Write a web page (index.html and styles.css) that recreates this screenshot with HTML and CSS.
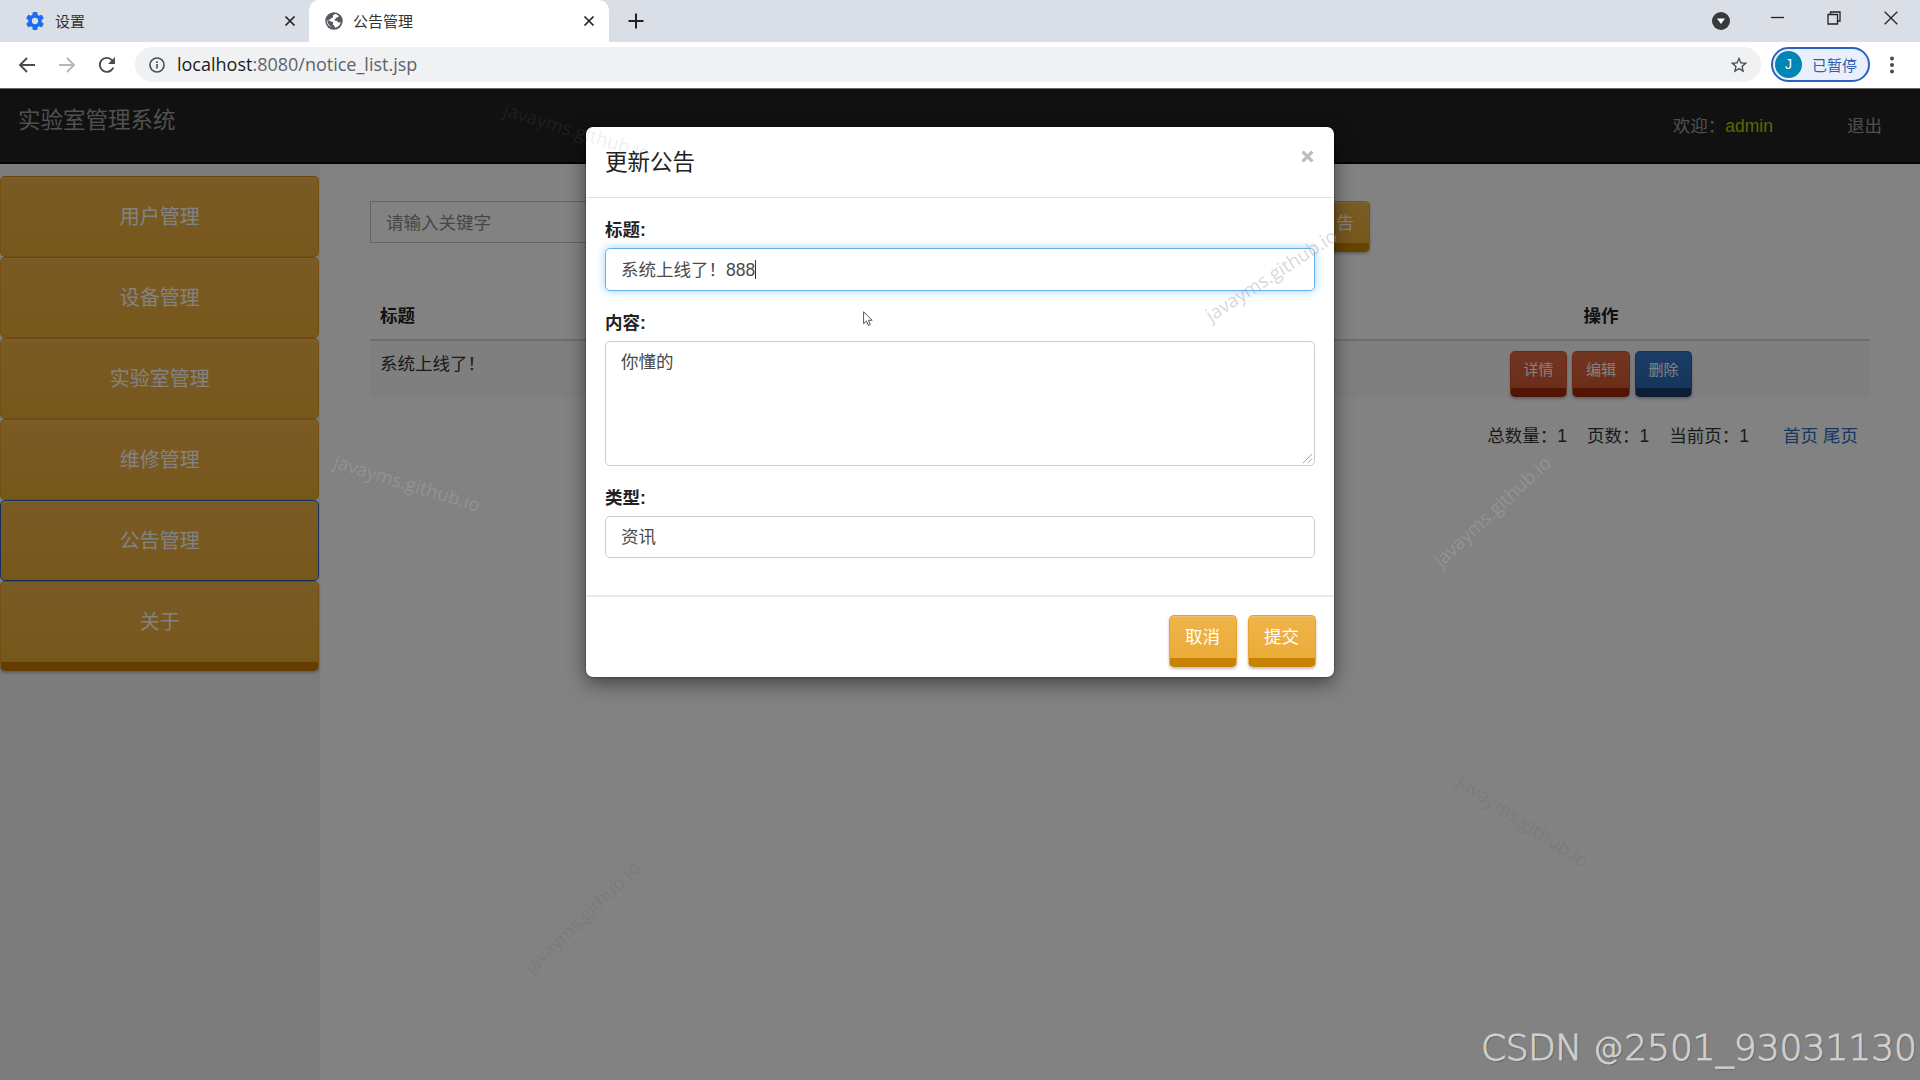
FILE: index.html
```html
<!DOCTYPE html>
<html lang="zh-CN">
<head>
<meta charset="utf-8">
<title>公告管理</title>
<link rel="stylesheet" href="styles.css">
</head>
<body>
<div class="window">
  <div class="tabstrip">
    <div class="tab">
      <svg class="fav" viewBox="2 2 20 20"><path fill="#1a6cf0" d="M19.4 13c.04-.32.07-.66.07-1s-.03-.68-.07-1l2.1-1.65c.2-.15.25-.42.13-.64l-2-3.46c-.12-.22-.39-.3-.61-.22l-2.49 1a7.300 7.300 0 0 0-1.690-.98l-.38-2.650A.49.49 0 0 0 14 2h-4a.49.49 0 0 0-.49.42l-.38 2.650c-.61.25-1.170.59-1.690.98l-2.490-1a.49.49 0 0 0-.61.22l-2 3.460c-.13.22-.07.49.12.64L4.570 11c-.04.32-.07.65-.07 1s.03.68.07 1l-2.110 1.650c-.19.15-.24.42-.12.64l2 3.460c.12.22.39.3.61.22l2.490-1c.52.4 1.080.73 1.690.98l.38 2.650c.03.24.24.4.49.4h4c.25 0 .46-.16.49-.4l.38-2.650c.61-.25 1.170-.59 1.690-.98l2.490 1c.22.08.49 0 .61-.22l2-3.460a.5.5 0 0 0-.12-.64zM12 15.500a3.500 3.500 0 1 1 0-7 3.500 3.500 0 0 1 0 7z"/></svg>
      <span class="tab-title">设置</span>
      <svg class="tab-x" viewBox="0 0 12 12"><path d="M1.500 1.500l9 9m0-9l-9 9"/></svg>
    </div>
    <div class="tab active">
      <svg class="fav" viewBox="0 0 20 20"><circle cx="10" cy="10" r="9.700" fill="#55595e"/><path fill="#fff" d="M11.800 2.300c1.500.5 2.800 1.300 3.600 2.300-.3 1-1.300 1-2.200 1.400-1 .4-.9 1.500-1.900 1.700-.8.300-1 .9-.6 1.600.6.700 1.900.2 2.700.8.700.6.900 1.400 1.900 1.500.9.100 1.700-.4 2.300-.3-.8 3-3 5.500-6.300 6.200-.9-.4-.3-1.500-.9-2.300-.5-.6-1.600-.8-1.700-1.700 0-.7.600-1.300.200-2-.6-.8-1.900-.6-2.900-1.100-1-.6-1.700-1.600-3.600-1.400.300 3.600 2.200 6.500 5.600 7.800-3.600-.4-6.200-3.700-6.100-7.300.500-1 2-.6 3.200-.9 1-.3 1-1.300 1.900-1.700.8-.4 1.700-.2 1.900-1 .1-.9-.4-1.600.1-2.400.6-.8 1.900-.7 2.800-1.200z"/></svg>
      <span class="tab-title">公告管理</span>
      <svg class="tab-x" viewBox="0 0 12 12"><path d="M1.500 1.500l9 9m0-9l-9 9"/></svg>
    </div>
    <svg class="newtab" viewBox="0 0 16 16"><path d="M8 .5v15M.5 8h15"/></svg>
    <div class="controls">
      <svg width="18" height="18" viewBox="0 0 18 18"><circle cx="9" cy="9" r="9" fill="#37393d"/><path d="M5 6.500h8l-4 5.500z" fill="#fff"/></svg>
      <svg width="13" height="14" viewBox="0 0 13 14"><path d="M0 6.500h13" stroke="#222" stroke-width="1.300"/></svg>
      <svg width="14" height="14" viewBox="0 0 14 14"><path d="M1 3.500h9.500V13H1zM3.500 3V1H13v9h-2" fill="none" stroke="#222" stroke-width="1.300"/></svg>
      <svg width="14" height="14" viewBox="0 0 14 14"><path d="M.7.7l12.600 12.600m0-12.600L.7 13.300" stroke="#222" stroke-width="1.300"/></svg>
    </div>
  </div>
  <div class="toolbar">
    <svg class="nav" viewBox="0 0 18 18"><path d="M17 9H2.500M9 2L2 9l7 7"/></svg>
    <svg class="nav off" viewBox="0 0 18 18"><path d="M1 9h14.500M9 2l7 7-7 7"/></svg>
    <svg class="nav" viewBox="0 0 18 18"><path d="M15.300 11.500A7 7 0 1 1 14 4.200l2 2"/><path class="solid" d="M17 1v7h-7z"/></svg>
    <div class="address">
      <svg class="info" viewBox="0 0 18 18"><circle cx="9" cy="9" r="7.900"/><path d="M9 8v5M9 4.800v1.900"/></svg>
      <span class="url"><b>localhost</b>:8080/notice_list.jsp</span>
      <svg class="star" viewBox="0 0 24 24"><path d="M22 9.240l-7.190-.62L12 2 9.190 8.630 2 9.240l5.460 4.730L5.820 21 12 17.270 18.180 21l-1.630-7.030zM12 15.400l-3.760 2.270 1-4.280-3.320-2.880 4.380-.38L12 6.100l1.710 4.040 4.380.38-3.320 2.880 1 4.280z"/></svg>
    </div>
    <div class="profile"><span class="avatar">J</span><span>已暂停</span></div>
    <svg class="more" viewBox="0 0 6 18"><circle cx="3" cy="2.500" r="2"/><circle cx="3" cy="9" r="2"/><circle cx="3" cy="15.500" r="2"/></svg>
  </div>

  <div class="page">
    <header class="topbar">
      <span class="brand">实验室管理系统</span>
      <span class="hello">欢迎：<em>admin</em></span>
      <span class="logout">退出</span>
    </header>
    <div class="content">
      <nav class="sidebar">
        <a class="item">用户管理</a>
        <a class="item">设备管理</a>
        <a class="item">实验室管理</a>
        <a class="item">维修管理</a>
        <a class="item focus">公告管理</a>
        <a class="item last">关于</a>
      </nav>
      <main class="main">
        <div class="filters">
          <div class="search">请输入关键字</div>
          <div class="btn add">告</div>
        </div>
        <div class="thead"><span>标题</span><span class="ops">操作</span></div>
        <div class="trow">
          <span>系统上线了！</span>
          <div class="ops">
            <div class="btn small red">详情</div>
            <div class="btn small red">编辑</div>
            <div class="btn small blue">删除</div>
          </div>
        </div>
        <div class="pager">
          <span>总数量：1</span><span>页数：1</span><span>当前页：1</span>
          <span class="links"><a>首页</a><a>尾页</a></span>
        </div>
      </main>
    </div>

    <div class="backdrop">
      <section class="modal">
        <div class="modal-head">
          <h4>更新公告</h4>
          <svg class="close" viewBox="0 0 12 12"><path d="M1.500 1.500l9 9m0-9l-9 9"/></svg>
        </div>
        <div class="modal-body">
          <div class="label">标题:</div>
          <div class="field focused">系统上线了！888<i class="caret"></i></div>
          <div class="label">内容:</div>
          <div class="field area">你懂的
            <svg class="grip" viewBox="0 0 12 12"><path d="M1 11L11 1M6 11l5-5"/></svg>
          </div>
          <div class="label">类型:</div>
          <div class="field">资讯</div>
        </div>
        <div class="modal-foot">
          <div class="btn">取消</div>
          <div class="btn">提交</div>
        </div>
      </section>
    </div>
  </div>

  <span class="wm w1">javayms.github.io</span>
  <span class="wm w2">javayms.github.io</span>
  <span class="wm w3">javayms.github.io</span>
  <span class="wm w4">javayms.github.io</span>
  <span class="wm w5">javayms.github.io</span>
  <span class="wm w6">javayms.github.io</span>
  <span class="csdn"><span class="name">CSDN</span> <span class="at">@</span>2501_93031130</span>
  <svg class="cursor" viewBox="0 0 10 16"><path d="M.6.8v11.800l2.800-2.600 1.900 4.400 2-.9-1.900-4.200h3.800z"/></svg>
</div>
</body>
</html>
```
FILE: styles.css
```css
* { box-sizing: border-box; }
body {
  margin: 0;
  font-family: "Liberation Sans", "Noto Sans CJK SC", sans-serif;
  font-size: 17.5px;
  line-height: 25px;
  color: #333;
}
.window {
  position: relative;
  width: 1920px;
  height: 1080px;
  overflow: hidden;
  display: flex;
  flex-direction: column;
}

/* browser chrome */
.tabstrip {
  height: 42px;
  flex: none;
  display: flex;
  background: #dadee6;
}
.tab {
  width: 309px;
  height: 42px;
  padding: 0 13px 0 26px;
  display: flex;
  align-items: center;
  font-size: 15px;
  color: #333;
}
.tab.active {
  width: 300px;
  padding: 0 15px 0 16px;
  background: #fff;
  border-radius: 10px 10px 0 0;
}
.fav { width: 18px; height: 18px; flex: none; }
.tab-title { margin-left: 11px; flex: 1; line-height: 24px; padding-top: 1px; }
.tab.active .tab-title { margin-left: 10px; }
.tab-x { width: 12px; height: 12px; stroke: #222; stroke-width: 1.7; }
.tab.active .tab-x { margin-right: -1px; }
.newtab {
  width: 16px;
  height: 16px;
  margin: 13px 0 0 19px;
  stroke: #222;
  stroke-width: 2;
}
.controls {
  margin-left: auto;
  padding: 11px 22px 0 0;
  display: grid;
  grid-template-columns: 18px 13px 14px 14px;
  column-gap: 42px;
}
.controls svg:nth-child(1) { margin: 1px 0 0 -1px; }
.controls svg:nth-child(2) { margin-left: -2px; }
.controls svg:nth-child(3) { margin-left: -1px; }
.toolbar {
  height: 47px;
  flex: none;
  display: flex;
  align-items: center;
  background: #fff;
  padding: 0 20px 1px 18px;
  border-bottom: 1px solid #666;
}
.nav {
  width: 18px;
  height: 18px;
  margin-right: 22px;
  fill: none;
  stroke: #494c50;
  stroke-width: 1.900;
}
.nav.off { stroke: #b4b6b9; }
.nav .solid { fill: #494c50; stroke: none; }
.address {
  width: 1626px;
  height: 35px;
  margin-left: -3px;
  padding: 0 12px 0 14px;
  border-radius: 18px;
  background: #f0f1f3;
  display: flex;
  align-items: center;
}
.info { width: 16px; height: 16px; fill: none; stroke: #494c50; stroke-width: 1.800; }
.url {
  flex: 1;
  margin: -1px 0 0 12px;
  font: 18px/24px "Open Sans", "Noto Sans", sans-serif;
  color: #5f6368;
}
.url b { font-weight: 400; color: #1b1b1b; }
.star { width: 20px; height: 20px; fill: #494c50; }
.profile {
  width: 99px;
  height: 35px;
  margin-left: 10px;
  padding-left: 2px;
  border: 2px solid #2b62c0;
  border-radius: 18px;
  background: #eaf0fb;
  display: flex;
  align-items: center;
  gap: 10px;
  font-size: 15px;
  color: #2f5fae;
}
.profile span:last-child { padding-top: 2px; }
.avatar {
  width: 27px;
  height: 27px;
  border-radius: 50%;
  background: #0086b5;
  color: #fff;
  font: 14px/27px "Liberation Sans", sans-serif;
  text-align: center;
}
.more { width: 6px; height: 18px; margin-left: 19px; fill: #494c50; }

/* application */
.page { position: relative; flex: 1; display: flex; flex-direction: column; }
.topbar {
  height: 75px;
  flex: none;
  display: flex;
  background: #222;
  border-bottom: 2px solid #080808;
  color: #9d9d9d;
  padding: 0 38px 0 18px;
}
.brand { flex: 1; font-size: 22.500px; line-height: 64px; }
.hello, .logout { line-height: 75px; }
.hello em { font-style: normal; color: #bac800; }
.logout { width: 35px; margin-left: 74px; }
.content { flex: 1; display: flex; background: #fff; }
.sidebar {
  width: 320px;
  padding-top: 12px;
  background: #f4f4f4;
  border-right: 1px solid #f0f0f0;
}
.item {
  display: block;
  height: 81px;
  width: 318.5px;
  padding-left: 1px;
  border: 1px solid #e39c20;
  border-top-color: #d2881a;
  border-radius: 5px;
  background: linear-gradient(#f1b24a, #e8ab36);
  box-shadow: inset 0 1px 0 #f6be63;
  color: #fff;
  font-size: 20px;
  line-height: 81px;
  text-align: center;
}
.item.focus { border: 1px solid #2a64b0; }
.item.last {
  height: 90px;
  border-bottom: 9px solid #c27a00;
  box-shadow: inset 0 1px 0 #f6be63, 0 2px 3px rgba(0, 0, 0, .25);
}
.main { width: 1550px; padding: 37px 0 0 50px; }
.filters { display: flex; height: 92px; align-items: flex-start; }
.search {
  width: 500px;
  height: 42px;
  border: 1px solid #c4c4c4;
  padding: 0 15px;
  line-height: 42px;
  color: #8a8a8a;
}
.btn {
  height: 52px;
  min-width: 68px;
  border: 1px solid #e5a52f;
  border-bottom: 9px solid #c78300;
  border-radius: 5px;
  background: linear-gradient(#f0b44a, #eaab37);
  box-shadow: 0 2px 3px rgba(0, 0, 0, .25), inset 0 1px 0 #f6c267;
  color: #fff;
  line-height: 42px;
  text-align: center;
}
.add { height: 51px; width: 120px; margin-left: 380px; padding-right: 15px; text-align: right; }
.thead {
  height: 48px;
  padding: 0 10px;
  border-bottom: 2px solid #d8d8d8;
  display: flex;
  justify-content: space-between;
  font-weight: 700;
  line-height: 46px;
  color: #222;
}
.ops { width: 518px; display: flex; justify-content: center; gap: 5px; }
.trow {
  height: 57px;
  padding: 10px;
  display: flex;
  justify-content: space-between;
  background: #f9f9f9;
  line-height: 27px;
}
.btn.small { height: 46px; min-width: 57px; width: 57.5px; font-size: 15px; line-height: 36px; }
.red { background: linear-gradient(#dd6a43, #d45a32); border-color: #cf532d; border-bottom-color: #a02a0c; box-shadow: 0 2px 3px rgba(0, 0, 0, .25); }
.blue { background: linear-gradient(#3478c8, #2b6ab4); border-color: #2462ad; border-bottom-color: #163b6b; box-shadow: 0 2px 3px rgba(0, 0, 0, .25); }
.pager {
  padding: 26px 12px 0 0;
  display: flex;
  justify-content: flex-end;
  gap: 20px;
}
.links { display: flex; gap: 5px; margin-left: 14px; color: #2f6db8; }

/* dialog */
.backdrop {
  position: absolute;
  inset: 0;
  padding-top: 38px;
  background: rgba(0, 0, 0, .49);
}
.modal {
  width: 748px;
  height: 550px;
  margin-left: 586px;
  border-radius: 7px;
  background: #fff;
  box-shadow: 0 6px 19px rgba(0, 0, 0, .5), 0 0 2px rgba(0, 0, 0, .6);
}
.modal-head {
  height: 71px;
  padding: 0 20px 0 19px;
  border-bottom: 1px solid #e2e2e2;
  display: flex;
  justify-content: space-between;
}
.modal-head h4 { margin: 0; font-size: 22.500px; font-weight: 400; line-height: 71px; color: #222; }
.close { width: 13px; height: 13px; margin-top: 23px; stroke: #bdbdbd; stroke-width: 3; }
.modal-body { height: 399px; padding: 20px 19px 0; border-bottom: 2px solid #e9e9e9; }
.label { height: 30px; font-weight: 700; line-height: 25px; color: #222; }
.field {
  height: 42.5px;
  margin-bottom: 20px;
  padding: 1px 15px 0;
  border: 1px solid #ccc;
  border-radius: 5px;
  line-height: 42px;
  color: #4a4a4a;
  display: flex;
  align-items: center;
}
.field.focused { border: 1px solid #66afe9; box-shadow: 0 0 10px rgba(102, 175, 233, .6); }
.caret { width: 1px; height: 19px; background: #333; }
.area { position: relative; height: 125px; line-height: 41px; padding-top: 0; align-items: flex-start; }
.grip { position: absolute; right: 1px; bottom: 1px; width: 11px; height: 11px; stroke: #999; stroke-width: 1; }
.modal-foot { padding: 18px 18.5px 0; display: flex; justify-content: flex-end; gap: 11px; }

/* overlays on top of the whole frame */
.wm {
  position: absolute;
  width: 180px;
  font: 18.7px/24px "Open Sans", "Noto Sans", sans-serif;
  text-align: center;
  color: rgba(160, 160, 160, .42);
}
.w1 { left: 487px; top: 119px; transform: rotate(17deg); color: rgba(128, 128, 128, .14); }
.w2 { left: 1181px; top: 263px; transform: rotate(-33deg); }
.w3 { left: 317px; top: 471px; transform: rotate(17deg); color: rgba(190, 190, 190, .28); }
.w4 { left: 1402px; top: 499px; transform: rotate(-43deg); color: rgba(190, 190, 190, .3); }
.w5 { left: 1433px; top: 809px; transform: rotate(33deg); color: rgba(100, 100, 100, .24); }
.w6 { left: 492px; top: 905px; transform: rotate(-44deg); color: rgba(100, 100, 100, .26); }
.csdn {
  position: absolute;
  right: 3px;
  bottom: 11px;
  font: 36px/42px "DejaVu Sans", sans-serif;
  font-weight: 200;
  color: #d0d0d0;
  -webkit-text-stroke: .9px #d0d0d0;
  text-shadow: 1px 1px 1px #555;
  white-space: nowrap;
}
.name { letter-spacing: -.5px; }
.at { display: inline-block; width: 31px; line-height: 36px; font-size: 30px; vertical-align: 2px; }
.cursor { position: absolute; left: 863px; top: 311px; width: 10px; height: 16px; fill: #fff; stroke: #555; }
```
